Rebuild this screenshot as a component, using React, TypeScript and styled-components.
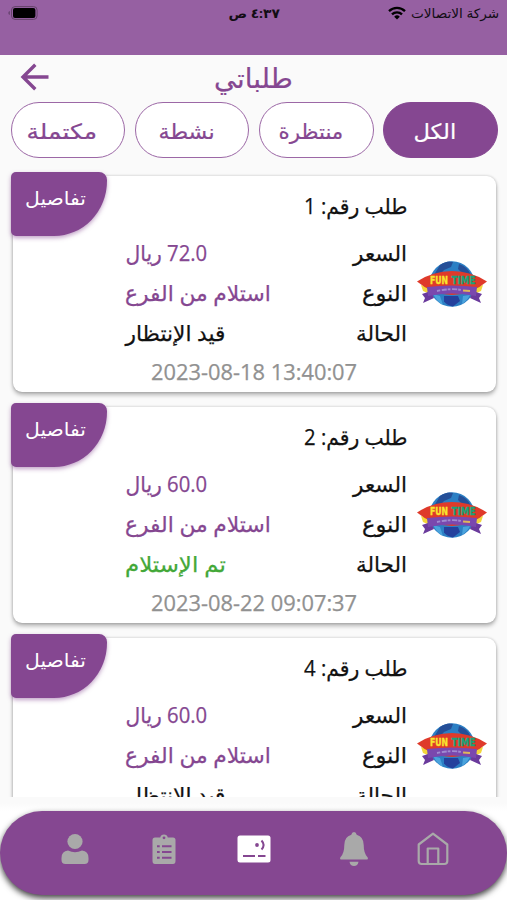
import React, { useLayoutEffect, useRef, useState } from "react";
import styled, { createGlobalStyle, css } from "styled-components";

const PURPLE = "#854791";
const MUTED = "#a9a9a9";

const GlobalStyle = createGlobalStyle`
  * { box-sizing: border-box; }
  body { margin: 0; background: #fafafa; }
`;

const Screen = styled.div`
  width: 507px;
  height: 900px;
  overflow: hidden;
  display: flex;
  flex-direction: column;
  direction: rtl;
  background: #fafafa;
  color: #111;
  font-family: "Open Sans", "DejaVu Sans", sans-serif;
`;

const FitBox = styled.span<{ $width: number; $ltr?: boolean }>`
  display: inline-flex;
  justify-content: center;
  flex: none;
  width: ${(p) => p.$width}px;
  direction: ${(p) => (p.$ltr ? "ltr" : "rtl")};
`;

const FitInner = styled.span`
  flex: none;
  white-space: nowrap;
  transform-origin: center;
`;

/* Condenses or widens a single line so that it fills a fixed width. */
function FitText({ width, ltr, children }: { width: number; ltr?: boolean; children: string }) {
  const ref = useRef<HTMLSpanElement>(null);
  const [scale, setScale] = useState(1);
  useLayoutEffect(() => {
    if (ref.current) setScale(width / ref.current.offsetWidth);
  }, [width, children]);
  return (
    <FitBox $width={width} $ltr={ltr}>
      <FitInner ref={ref} style={{ transform: `scaleX(${scale})` }}>
        {children}
      </FitInner>
    </FitBox>
  );
}

const StatusBar = styled.div`
  height: 54.5px;
  flex: none;
  display: grid;
  grid-template-columns: 1fr 52px 1fr;
  align-items: start;
  padding: 0 8px;
  background: #9660a2;
  color: #120d14;
  font-size: 13px;
  line-height: 26px;
`;

const Carrier = styled.div`
  display: flex;
  align-items: center;
  gap: 5px;
  height: 26px;
`;

const Clock = styled.div`
  font-weight: 700;
  height: 26px;
`;

const Battery = styled.div`
  display: flex;
  justify-content: flex-end;
  align-items: center;
  height: 26px;
`;

const Header = styled.header`
  flex: none;
  height: 47.5px;
  display: grid;
  grid-template-columns: 1fr 78px 1fr;
  padding: 0 20px;
  color: ${PURPLE};
  font-size: 27px;
  line-height: 45px;
  -webkit-text-stroke: 0.2px;
`;

const BackButton = styled.button`
  grid-column: 3;
  justify-self: end;
  align-self: start;
  margin-top: 7px;
  padding: 0;
  border: 0;
  background: none;
  color: ${PURPLE};
  display: flex;
`;

const Tabs = styled.nav`
  flex: none;
  display: flex;
  gap: 9.7px;
  padding: 0 9px 0 10.5px;
`;

const Tab = styled.button<{ $active?: boolean }>`
  flex: 1;
  height: 56px;
  direction: ltr;
  display: flex;
  justify-content: center;
  align-items: center;
  padding: 1px 12px 0 0;
  border: 1.4px solid ${(p) => (p.$active ? PURPLE : "#9c68a6")};
  border-radius: 28px;
  background: ${(p) => (p.$active ? PURPLE : "#fff")};
  color: ${(p) => (p.$active ? "#fff" : PURPLE)};
  font: inherit;
  font-size: 21px;
  line-height: 54px;
  -webkit-text-stroke: 0.2px;
`;

const List = styled.main`
  flex: none;
  height: 632px;
  margin-top: 7px;
  padding: 10.5px 11px 0 12.5px;
  overflow: hidden;
`;

const Card = styled.article`
  position: relative;
  height: 216px;
  margin-bottom: 15px;
  padding: 10px 0 0;
  display: grid;
  grid-template-columns: 89px 1fr;
  grid-template-rows: 48px 120px 38px;
  border-radius: 9px;
  background: #fff;
  box-shadow: 0 3px 4px rgba(0, 0, 0, 0.28), 0 0 3px rgba(0, 0, 0, 0.2);
  font-size: 21.5px;
  -webkit-text-stroke: 0.25px;
`;

const LogoCell = styled.div`
  grid-row: 2;
  display: flex;
  align-items: center;
  justify-content: center;
  padding-bottom: 20px;
`;

const OrderTitle = styled.h2`
  grid-column: 2;
  margin: 0;
  font: inherit;
  line-height: 40px;
`;

const Facts = styled.dl`
  grid-column: 2;
  grid-row: 2;
  margin: 0;
  padding-left: 112.5px;
`;

const Fact = styled.div`
  display: flex;
  justify-content: space-between;
  height: 40px;
  line-height: 38px;
`;

const Label = styled.dt`
  display: flex;
`;

const tones = {
  purple: css`color: ${PURPLE};`,
  black: css`color: #111;`,
  green: css`color: #43a838;`,
};

const Value = styled.dd<{ $tone: keyof typeof tones }>`
  margin: 0;
  display: flex;
  ${(p) => tones[p.$tone]}
`;

const DateLine = styled.time`
  grid-column: 1 / -1;
  grid-row: 3;
  display: flex;
  justify-content: center;
  color: #919191;
  font-size: 21px;
  line-height: 36px;
`;

const DetailsTag = styled.button`
  position: absolute;
  left: -1.5px;
  top: -3.5px;
  width: 96px;
  height: 63.5px;
  padding: 0 7px 11px 0;
  display: flex;
  justify-content: center;
  align-items: center;
  direction: ltr;
  border: 0;
  border-radius: 5px 8px 53px 5px / 5px 8px 55px 5px;
  background: ${PURPLE};
  color: #fff;
  box-shadow: 0 2px 4px rgba(133, 71, 145, 0.5);
  font: inherit;
  font-size: 19px;
  -webkit-text-stroke: 0;
`;

const NavArea = styled.footer`
  flex: 1;
  padding-top: 14px;
  background: linear-gradient(#fafafa 6px, #fff 14px);
`;

const NavBar = styled.div`
  height: 84px;
  display: grid;
  grid-template-columns: 88px 90px 90px 109px 50px;
  align-items: center;
  justify-items: center;
  direction: ltr;
  padding: 0 0 8px 31px;
  border-radius: 42px;
  background: ${PURPLE};
  color: ${MUTED};
  box-shadow: 0 3px 6px rgba(0, 0, 0, 0.75);
`;

const NavItem = styled.button`
  padding: 0;
  border: 0;
  background: none;
  color: inherit;
  display: flex;
`;

const WifiIcon = () => (
  <svg width="18" height="14" viewBox="0 0 18 14" fill="none" stroke="#000" strokeWidth="2.3">
    <path d="M1 5.2a11.5 11.5 0 0 1 16 0M4 8.4a7.1 7.1 0 0 1 10 0" />
    <path d="M9 13.6 6.2 10.7a4 4 0 0 1 5.6 0Z" fill="#000" stroke="none" />
  </svg>
);

const BatteryIcon = () => (
  <svg width="30" height="14" viewBox="0 0 30 14">
    <path d="M1.7 5a2.2 2.2 0 0 0 0 4Z" fill="#5b3b63" />
    <rect x="3.5" y=".6" width="25.6" height="12.8" rx="3.5" fill="none" stroke="#644369" />
    <rect x="5" y="2" width="22.4" height="10" rx="2" fill="#000" />
  </svg>
);

const ArrowIcon = () => (
  <svg width="30" height="30" viewBox="0 0 30 30" fill="none" stroke="currentColor" strokeWidth="3.4">
    <path d="M28.5 15H3.5M15.3 2.8 3 15l12.3 12.2" />
  </svg>
);

const FunTimeLogo = () => (
  <svg width="70" height="48" viewBox="0 0 70 48">
    <circle cx="35" cy="24" r="22.8" fill="#2c7fc4" />
    <path d="M23 5q7-5 13-3l-2 5-7 3-5 6-5-1Z M42 4q9 3 12 11l-8-1-5-5Z" fill="#254f98" />
    <path d="M27 36h14l2 5-7 5.5q-6-1-9-5Z" fill="#24419d" />
    <path d="M16 34q5 9 10 11l-3-9Zm30 2 7-1q-3 6-8 9Z" fill="#4aa3dc" />
    <path d="m4 25 11 3v7l-9-4Zm62 0-11 3v7l9-4Z" fill="#f3d63a" />
    <path d="M0 21.5Q16 11 35 11t35 10.5Q54 35 35 35T0 21.5Z" fill="#df3a2a" />
    <path d="m5 34 9-3 3 7-11 5 2-5Zm60 0-9-3-3 7 11 5-2-5Z" fill="#6a3a9c" />
    <path d="M10 27q25-3 50 0l-1 9q-24-5-48 0Z" fill="#7a48ae" />
    <path d="M20 31q15-3 24-1" fill="none" stroke="#a08cd2" strokeWidth="1.8" strokeDasharray="3 1.5 5 1" />
    <path d="M46 30.5l7 .5" stroke="#dfb65a" strokeWidth="2" />
    <g fontFamily="DejaVu Sans" fontWeight="700" fontSize="11" direction="ltr" strokeWidth=".4">
      <text x="13" y="24" fill="#f8e52e" stroke="#f8e52e" textLength="18" lengthAdjust="spacingAndGlyphs">FUN</text>
      <text x="34.5" y="24" fill="#18a27a" stroke="#18a27a" textLength="24" lengthAdjust="spacingAndGlyphs">TIME</text>
    </g>
  </svg>
);

const UserIcon = () => (
  <svg width="28" height="32" viewBox="0 0 28 32" fill="currentColor">
    <circle cx="14" cy="8.5" r="7.6" />
    <path d="M.5 27v-2q0-7 6.5-7.5 7 3.5 14 0 6.5.5 6.5 7.5v2q0 4-4 4h-19q-4 0-4-4Z" />
  </svg>
);

const ClipboardIcon = () => (
  <svg width="24" height="32" viewBox="0 0 24 32">
    <path d="M3 4.5h5.2a3.9 3.9 0 0 1 7.6 0H21q2.500 0 2.500 2.500v21q0 3-2.500 3H3q-2.500 0-2.500-3V7Q.5 4.500 3 4.500Z" fill="currentColor" />
    <circle cx="12" cy="4.8" r="1.4" fill={PURPLE} />
    <path d="M5 13.3h2.7M10 13.3h9.5M5 19h2.7M10 19h9.5M5 24.7h2.7M10 24.7h9.5" stroke={PURPLE} strokeWidth="2" />
  </svg>
);

const OrdersIcon = () => (
  <svg width="34" height="28" viewBox="0 0 34 28">
    <rect x=".5" y=".5" width="33" height="27" rx="2.5" fill="#fff" />
    <circle cx="20" cy="10" r="1.9" fill={PURPLE} />
    <path d="M24.5 5.5q4.2 4.5 0 9" fill="none" stroke={PURPLE} strokeWidth="2" />
    <path d="M6 21h12M21 21h7.5" stroke={PURPLE} strokeWidth="2.2" />
  </svg>
);

const BellIcon = () => (
  <svg width="30" height="36" viewBox="0 0 30 36" fill="currentColor">
    <path d="M15 1q2.2 0 2.7 2.7 7 2 7 10.3 0 8.5 4 12.5.8 2-1.2 2h-25q-2 0-1.2-2 4-4 4-12.5 0-8.3 7-10.3Q12.800 1 15 1Z" />
    <path d="M10.5 30.7h9q-.8 4.3-4.5 4.3t-4.5-4.3Z" />
  </svg>
);

const HomeIcon = () => (
  <svg width="32" height="34" viewBox="0 0 32 34" fill="none" stroke="currentColor" strokeWidth="2.2" strokeLinejoin="round">
    <path d="M1.7 12.5 16 1.7l14.3 10.8V29q0 3-3 3H4.7q-3 0-3-3Z" />
    <path d="M10.7 32V16.5h10.6V32" />
  </svg>
);

const tabs = [
  { text: "الكل", width: 43, active: true },
  { text: "منتظرة", width: 65 },
  { text: "نشطة", width: 56 },
  { text: "مكتملة", width: 71 },
];

type Order = {
  id: string;
  price: string;
  status: string;
  statusWidth: number;
  tone: keyof typeof tones;
  date: string;
};

const orders: Order[] = [
  { id: "1", price: "72.0", status: "قيد الإنتظار", statusWidth: 100, tone: "black", date: "2023-08-18 13:40:07" },
  { id: "2", price: "60.0", status: "تم الإستلام", statusWidth: 101, tone: "green", date: "2023-08-22 09:07:37" },
  { id: "4", price: "60.0", status: "قيد الإنتظار", statusWidth: 100, tone: "black", date: "2023-08-22 09:10:12" },
];

function OrderCard({ order }: { order: Order }) {
  return (
    <Card>
      <OrderTitle><FitText width={103}>{`طلب رقم: ${order.id}`}</FitText></OrderTitle>
      <LogoCell><FunTimeLogo /></LogoCell>
      <Facts>
        <Fact>
          <Label><FitText width={54}>السعر</FitText></Label>
          <Value $tone="purple"><FitText width={82}>{`${order.price} ريال`}</FitText></Value>
        </Fact>
        <Fact>
          <Label><FitText width={45}>النوع</FitText></Label>
          <Value $tone="purple"><FitText width={146}>استلام من الفرع</FitText></Value>
        </Fact>
        <Fact>
          <Label><FitText width={51}>الحالة</FitText></Label>
          <Value $tone={order.tone}><FitText width={order.statusWidth}>{order.status}</FitText></Value>
        </Fact>
      </Facts>
      <DateLine><FitText width={206} ltr>{order.date}</FitText></DateLine>
      <DetailsTag><FitText width={61}>تفاصيل</FitText></DetailsTag>
    </Card>
  );
}

export default function App() {
  return (
    <>
      <GlobalStyle />
      <Screen>
        <StatusBar>
          <Carrier><FitText width={88}>شركة الاتصالات</FitText><WifiIcon /></Carrier>
          <Clock><FitText width={51}>٤:٣٧ ص</FitText></Clock>
          <Battery><BatteryIcon /></Battery>
        </StatusBar>
        <Header>
          <span />
          <FitText width={79}>طلباتي</FitText>
          <BackButton aria-label="رجوع"><ArrowIcon /></BackButton>
        </Header>
        <Tabs>
          {tabs.map((t) => (
            <Tab key={t.text} $active={t.active}><FitText width={t.width}>{t.text}</FitText></Tab>
          ))}
        </Tabs>
        <List>
          {orders.map((o) => <OrderCard key={o.id} order={o} />)}
        </List>
        <NavArea>
          <NavBar>
            <NavItem><UserIcon /></NavItem>
            <NavItem><ClipboardIcon /></NavItem>
            <NavItem><OrdersIcon /></NavItem>
            <NavItem><BellIcon /></NavItem>
            <NavItem><HomeIcon /></NavItem>
          </NavBar>
        </NavArea>
      </Screen>
    </>
  );
}
